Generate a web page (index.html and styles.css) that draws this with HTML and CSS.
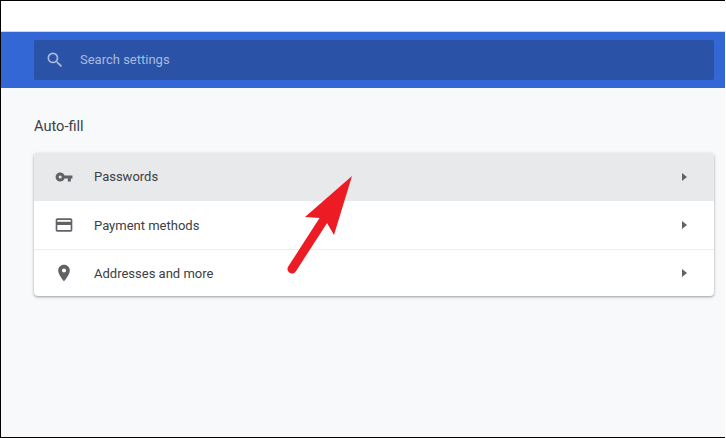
FILE: index.html
```html
<!DOCTYPE html>
<html lang="en">
<head>
<meta charset="utf-8">
<title>Settings</title>
<link rel="stylesheet" href="styles.css">
</head>
<body>
<div class="frame">
  <div class="topstrip"></div>
  <header class="bluebar">
    <div class="search">
      <svg class="search-icon" viewBox="0 0 24 24" width="20" height="20"><path d="M15.5 14h-.79l-.28-.27A6.47 6.47 0 0 0 16 9.5 6.5 6.5 0 1 0 9.5 16c1.61 0 3.09-.59 4.23-1.57l.27.28v.79l5 4.99L20.49 19l-4.99-5zm-6 0C7.01 14 5 11.99 5 9.5S7.01 5 9.5 5 14 7.01 14 9.5 11.99 14 9.5 14z"/></svg>
      <span class="search-text">Search settings</span>
    </div>
  </header>
  <main class="content">
    <h2 class="section-title">Auto-fill</h2>
    <div class="card">
      <div class="row row-hover">
        <svg class="row-icon icon-key" viewBox="0 0 24 24" width="20" height="20"><path d="M12.65 10A6 6 0 0 0 7 6a6 6 0 0 0 0 12 6 6 0 0 0 5.65-4H17v4h4v-4h2v-4H12.65zM7 14a2 2 0 1 1 0-4 2 2 0 0 1 0 4z"/></svg>
        <span class="row-label">Passwords</span>
        <span class="caret"></span>
      </div>
      <div class="row">
        <svg class="row-icon" viewBox="0 0 24 24" width="20" height="20"><path d="M20 4H4c-1.11 0-2 .89-2 2v12c0 1.11.89 2 2 2h16c1.11 0 2-.89 2-2V6c0-1.11-.89-2-2-2zm0 14H4v-6h16v6zm0-10H4V6h16v2z"/></svg>
        <span class="row-label">Payment methods</span>
        <span class="caret"></span>
      </div>
      <div class="row row-divided">
        <svg class="row-icon" viewBox="0 0 24 24" width="20" height="20"><path d="M12 2C8.13 2 5 5.13 5 9c0 5.25 7 13 7 13s7-7.75 7-13c0-3.87-3.13-7-7-7zm0 9.5a2.5 2.5 0 1 1 0-5 2.5 2.5 0 0 1 0 5z"/></svg>
        <span class="row-label">Addresses and more</span>
        <span class="caret"></span>
      </div>
    </div>
  </main>
  <svg class="arrow" viewBox="0 0 726 438" width="726" height="438">
    <path class="arrow-shaft" d="M292 269 L323 221"/>
    <path class="arrow-head" d="M352 176 L305 217 L320 218 L327 223 L334 235 Z"/>
  </svg>
</div>
</body>
</html>
```

FILE: styles.css
```css
* { box-sizing: border-box; }
html, body { margin: 0; padding: 0; height: 100%; overflow: hidden; }
body { background: #fff; font-family: Roboto, "Liberation Sans", sans-serif; }
.frame {
  position: relative;
  width: 725px;
  height: 438px;
  border-top: 1px solid #000;
  border-left: 1px solid #000;
  border-bottom: 1px solid #000;
  background: #f8f9fa;
  display: flex;
  flex-direction: column;
}
.topstrip { height: 31px; background: #fff; border-bottom: 1px solid #d4d6da; flex: none; }
.bluebar {
  flex: none;
  height: 56px;
  background: #3367d6;
  padding: 8px 11px 8px 33px;
}
.search {
  height: 40px;
  background: #2a52a7;
  border-radius: 2px;
  display: flex;
  align-items: center;
  padding-left: 11px;
  gap: 15px;
}
.search-icon { fill: #a9bbdf; flex: none; }
.search-text { color: #a9bbdf; font-size: 13px; line-height: 15px; margin-bottom: 2px; }
.content { flex: 1; padding: 0 11px 0 33px; }
.section-title {
  margin: 30px 0 0;
  height: 17px;
  line-height: 16px;
  font-size: 14.6px;
  font-weight: 400;
  color: #3c4043;
}
.card {
  margin-top: 18px;
  background: #fff;
  border-radius: 4px;
  overflow: hidden;
  box-shadow: 0 1px 2px rgba(60,64,67,.35), 0 1px 3px 1px rgba(60,64,67,.12);
}
.row {
  height: 48px;
  display: flex;
  align-items: center;
  padding-left: 20px;
  padding-right: 27px;
}
.row-hover { background: #e8e9eb; }
.row-divided { border-top: 1px solid #eceded; height: 47px; }
.row-icon { fill: #5f6368; flex: none; }
.icon-key { transform: scale(0.92); }
.row-label { margin-left: 20px; flex: 1; font-size: 13px; line-height: 15px; color: #3c4043; }
.row-hover .row-label { margin-bottom: 2px; }
.caret {
  width: 0;
  height: 0;
  border-top: 4px solid transparent;
  border-bottom: 4px solid transparent;
  border-left: 5px solid #5f6368;
}
.arrow { position: absolute; left: -1px; top: -1px; pointer-events: none; }
.arrow-shaft { stroke: #ed1c24; stroke-width: 9; stroke-linecap: round; fill: none; }
.arrow-head { fill: #ed1c24; }
```
